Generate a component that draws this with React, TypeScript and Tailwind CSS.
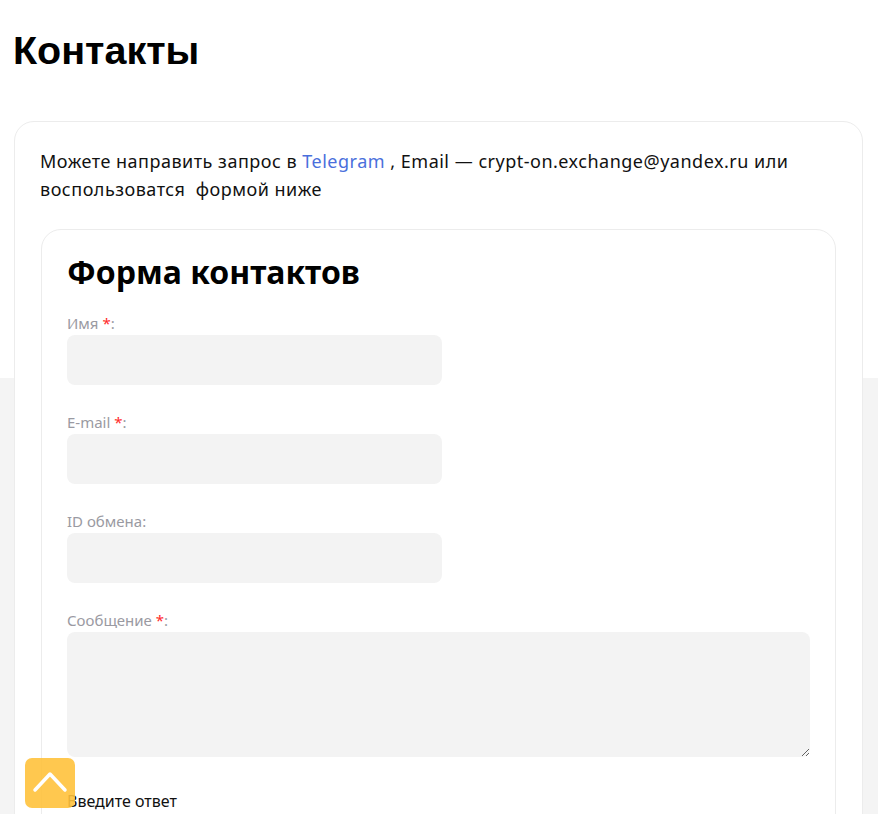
import React from "react";

const body = { fontFamily: '"Noto Sans", "Open Sans", sans-serif' };

function Field({ label, required, textarea }: { label: string; required?: boolean; textarea?: boolean }) {
  return (
    <div className="mb-[27px]">
      <div className="h-[20px] mb-[2px] text-[15px] leading-[20px] text-[#9a9aa2]">
        {label}
        {required && (
          <>
            {" "}
            <span className="text-[#ff2a2a]">*</span>
          </>
        )}
        :
      </div>
      {textarea ? (
        <textarea className="block w-full h-[125px] rounded-[8px] bg-[#f3f3f3] outline-none resize-y" />
      ) : (
        <input className="block w-[375px] h-[50px] rounded-[8px] bg-[#f3f3f3] outline-none" />
      )}
    </div>
  );
}

export default function App() {
  return (
    <div
      className="min-h-[814px] bg-[linear-gradient(to_bottom,#ffffff_378px,#f4f4f4_378px)] overflow-hidden"
      style={body}
    >
      <h1
        className="pl-[13px] pt-[28px] h-[121px] text-[39.5px] leading-[45px] font-bold text-black"
        style={{ fontFamily: '"Liberation Sans", Arial, sans-serif' }}
      >
        Контакты
      </h1>
      <div className="ml-[14px] mr-[15px] rounded-[20px] border border-[#ececec] bg-white pl-[25px] pr-[26px] pt-[25px] pb-[30px]">
        <p className="text-[18px] leading-[28px] tracking-[0.5px] text-[#111]">
          Можете направить запрос в <span className="text-[#4a6fdc]">Telegram</span> , Email — crypt-on.exchange@yandex.ru или воспользоватся&nbsp; формой ниже
        </p>
        <div className="ml-[1px] mt-[26px] rounded-[20px] border border-[#ececec] bg-white px-[25px] pt-[22px] pb-[30px]">
          <h2 className="text-[32px] leading-[40px] font-bold text-black mb-[21px]">Форма контактов</h2>
          <Field label="Имя" required />
          <Field label="E-mail" required />
          <Field label="ID обмена" />
          <Field label="Сообщение" required textarea />
          <div className="pt-[6px] text-[16px] leading-[22px] text-[#111]">Введите ответ</div>
        </div>
      </div>
      <button className="fixed left-[25px] bottom-[6px] w-[50px] h-[50px] rounded-[7px] bg-[#ffc23c]/90 flex items-center justify-center">
        <svg width="50" height="50" viewBox="0 0 50 50" fill="none">
          <path d="M10 32 L25 16 L40 32" stroke="white" strokeWidth="3.5" strokeLinecap="round" strokeLinejoin="round" />
        </svg>
      </button>
    </div>
  );
}
